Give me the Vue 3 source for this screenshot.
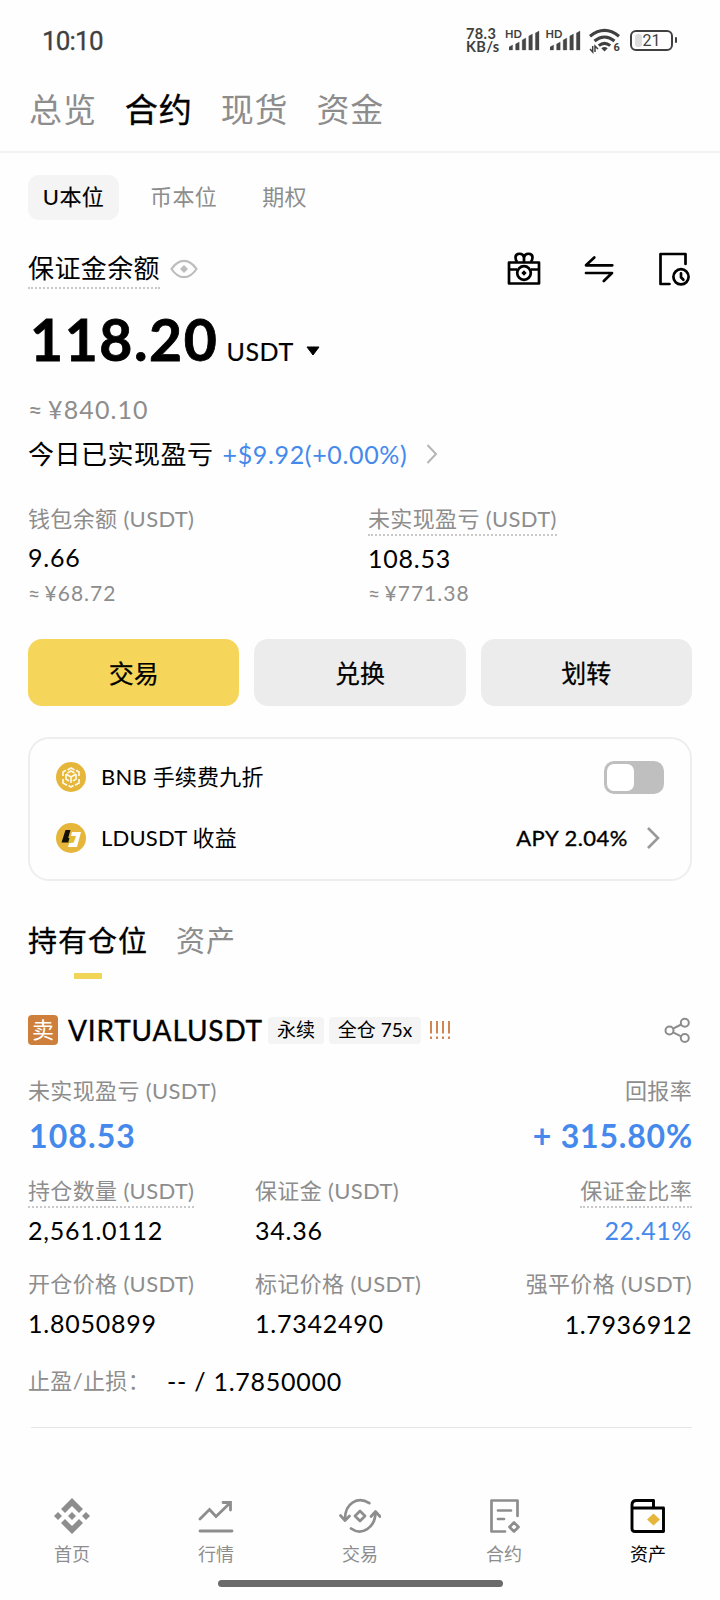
<script setup>
const mainTabs = ['总览', '合约', '现货', '资金']
const bars = [5, 8, 12, 16, 19]
const nav = ['首页', '行情', '交易', '合约', '资产']
</script>

<template>
  <div class="screen">
    <header class="status">
      <span class="clock">10:10</span>
      <div class="speed"><span>78.3</span><span>KB/s</span></div>
      <div v-for="n in 2" :key="n" class="signal">
        <span class="hd">HD</span>
        <svg width="31" height="21" viewBox="0 0 31 21">
          <path v-for="(h, i) in bars" :key="i" :d="`M${i * 6.6} 20V${22 - h}l3.6-2V20z`" fill="#454545" stroke="#454545" stroke-width=".3" stroke-linejoin="round" />
        </svg>
      </div>
      <svg class="wifi" width="32" height="27" viewBox="0 -1 32 27">
        <g fill="none" stroke="#404040" stroke-width="3.1">
          <path d="M1 8.2Q15.500 -3.500 30 8.200M5.500 13Q15.500 5 25.500 13M9.800 17.600Q15.500 13 21.200 17.600" />
        </g>
        <path d="M12.300 20.300q3.200-2.600 6.400 0L15.500 23.500z" fill="#404040" />
        <path d="M3.700 18v6L1 21M6 24v-6l3 3" fill="none" stroke="#404040" stroke-width="1.500" />
        <text x="24.500" y="23" font-family="Roboto, sans-serif" font-size="11" font-weight="700" fill="#404040">6</text>
      </svg>
      <div class="battery"><i></i><span>21</span></div>
      <b class="cap"></b>
    </header>

    <nav class="tabs">
      <span v-for="t in mainTabs" :key="t" :class="{ on: t === '合约' }">{{ t }}</span>
    </nav>

    <main>
      <div class="subtabs">
        <span class="pill">U本位</span><span class="coin">币本位</span><span>期权</span>
      </div>

      <div class="balance">
        <span class="title dotted">保证金余额</span>
        <svg class="eye" width="28" height="20" viewBox="0 0 28 20" fill="none" stroke="#bdbdbd" stroke-width="2.200">
          <path d="M1.500 10Q7 1.800 14 1.800T26.500 10Q21 18.200 14 18.200T1.500 10z" />
          <path d="M14 6l4 4-4 4-4-4z" fill="#bdbdbd" stroke="none" />
        </svg>
        <div class="tools">
          <svg width="34" height="34" viewBox="0 0 34 34" fill="none" stroke="#000" stroke-width="2.700" stroke-linejoin="round">
            <path d="M2 10.500h30v21H2zM2 17.500h8M24 17.500h8" />
            <circle cx="17" cy="21" r="6.800" />
            <path d="M17 10V5.500C16 0 8.500 1 8.500 5.500q0 3 2 4.500M17 5.500C18 0 25.500 1 25.500 5.500q0 3-2 4.500" />
            <path d="M17 18.300l2.700 2.700-2.700 2.700-2.700-2.700z" fill="#000" stroke="none" />
          </svg>
          <svg width="30" height="28" viewBox="0 0 30 28" fill="none" stroke="#000" stroke-width="2.700" stroke-linecap="round" stroke-linejoin="round">
            <path d="M28.300 10.300H2L10.300 2.500M2 18h26L19.800 26" />
          </svg>
          <svg width="34" height="34" viewBox="0 0 34 34" fill="none" stroke="#000" stroke-width="2.700" stroke-linecap="round" stroke-linejoin="round">
            <path d="M28.500 12V2H3.500v30h9" />
            <circle cx="24" cy="24.800" r="7.600" />
            <path d="M24 21.300v4l2.400 2.500" />
          </svg>
        </div>
      </div>

      <div class="amount">
        <b>118.20</b><span>USDT</span>
        <svg width="14" height="10" viewBox="0 0 14 10"><path d="M1 1h12L7 9z" stroke="#000" stroke-linejoin="round" /></svg>
      </div>
      <div class="fiat">≈ ¥840.10</div>
      <div class="today">
        <span>今日已实现盈亏</span><em>+$9.92(+0.00%)</em>
        <svg width="12" height="20" viewBox="0 0 12 20" fill="none" stroke="#b5b5b5" stroke-width="2"><path d="M1.500 1l8.500 9-8.500 9" /></svg>
      </div>

      <div class="stats">
        <div>
          <span class="label">钱包余额 (USDT)</span>
          <div class="num">9.66</div>
          <div class="approx">≈ ¥68.72</div>
        </div>
        <div>
          <span class="label dotted">未实现盈亏 (USDT)</span>
          <div class="num low">108.53</div>
          <div class="approx">≈ ¥771.38</div>
        </div>
      </div>

      <div class="buttons">
        <button class="primary">交易</button><button>兑换</button><button>划转</button>
      </div>

      <section class="card">
        <div class="item">
          <svg width="30" height="30" viewBox="0 0 30 30">
            <circle cx="15" cy="15" r="15" fill="#e5b63a" />
            <g fill="none" stroke="#fff8e4" stroke-width="1.700">
              <path d="M11.500 8L15 6l3.500 2M7 14v-4l3-1.700M20 8.300l3 1.700v4M7 17v4l4 2.300M23 17v4l-4 2.300M12.500 23.500L15 25l2.500-1.500" />
              <path d="M10 12l5 3 5-3M15 15v6M10 12v5l3 2M20 12v5l-3 2M11.500 11L15 9l3.500 2" />
            </g>
          </svg>
          <span>BNB 手续费九折</span>
          <i class="toggle"></i>
        </div>
        <div class="item">
          <svg width="30" height="30" viewBox="0 0 30 30">
            <circle cx="15" cy="15" r="15" fill="#e5b63a" />
            <path d="M9.500 7h5l-2.300 8h4.500l-1.500 4.500H5.500z" fill="#14110a" />
            <path d="M16 9h9l-4 15h-9l1.300-4.500h4.400L20 13h-5z" fill="#fff" />
            <path d="M13.500 15h4.500l-1.300 4.500h-4.500z" fill="#dcbf27" />
          </svg>
          <span>LDUSDT 收益</span>
          <strong>APY 2.04%</strong>
          <svg class="go" width="14" height="24" viewBox="0 0 14 24" fill="none" stroke="#999" stroke-width="2.600"><path d="M2 2l10 10L2 22" /></svg>
        </div>
      </section>

      <div class="holdtabs"><span class="on">持有仓位</span><span>资产</span></div>

      <div class="pair">
        <span class="side">卖</span><span class="symbol">VIRTUALUSDT</span>
        <span class="tag">永续</span><span class="tag wide">全仓 75x</span>
        <svg class="risk" width="22" height="20" viewBox="0 0 22 20" stroke="#cf8652" stroke-width="2">
          <path d="M2 1v12.500M8 1v12.500M14 1v12.500M20 1v12.500M2 16.500v2.500M8 16.500v2.500M14 16.500v2.500M20 16.500v2.500" />
        </svg>
        <svg class="share" width="27" height="27" viewBox="0 0 27 27" fill="none" stroke="#8c8c8c" stroke-width="2">
          <circle cx="5.500" cy="13.500" r="4" /><circle cx="20.800" cy="5.800" r="4" /><circle cx="20.800" cy="21" r="4" />
          <path d="M9 11.700l8.200-4.200M9 15.300l8.200 4" />
        </svg>
      </div>

      <div class="row pnl"><span class="label">未实现盈亏 (USDT)</span><span class="label">回报率</span></div>
      <div class="row big"><b>108.53</b><b>+ 315.80%</b></div>

      <div class="grid first">
        <div><span class="label dotted">持仓数量 (USDT)</span><div class="num">2,561.0112</div></div>
        <div><span class="label">保证金 (USDT)</span><div class="num">34.36</div></div>
        <div class="end"><span class="label dotted">保证金比率</span><div class="num blue">22.41%</div></div>
      </div>
      <div class="grid">
        <div><span class="label">开仓价格 (USDT)</span><div class="num">1.8050899</div></div>
        <div><span class="label">标记价格 (USDT)</span><div class="num">1.7342490</div></div>
        <div class="end"><span class="label">强平价格 (USDT)</span><div class="num low">1.7936912</div></div>
      </div>
      <div class="stop"><span class="label">止盈/止损：</span><span class="num">-- / 1.7850000</span></div>
      <hr>
    </main>

    <footer class="nav">
      <div v-for="(name, i) in nav" :key="name" :class="{ active: i === 4 }">
        <svg v-if="i === 0" width="42" height="36" viewBox="0 0 42 36" fill="#8d8d8d">
          <path d="M21 0l11 11-4 4-7-7-7 7-4-4zM21 36l11-11-4-4-7 7-7-7-4 4zM7 14l4 4-4 4-4-4zM35 14l4 4-4 4-4-4zM21 14l4 4-4 4-4-4z" />
        </svg>
        <svg v-else-if="i === 1" width="42" height="36" viewBox="0 0 42 36" fill="none" stroke="#8d8d8d" stroke-width="2.800" stroke-linecap="round">
          <path d="M5 21l9.500-9.500 6.500 7L35 5M28 4.500h7.500V12M5 33h32" />
        </svg>
        <svg v-else-if="i === 2" width="42" height="36" viewBox="0 0 42 36" fill="none" stroke="#8d8d8d" stroke-width="2.700" stroke-linecap="round" stroke-linejoin="round">
          <path d="M30.300 5.200C19-2 6 5 6 21M1.500 17.500L6 22.500l4.500-4.500M12 30.500C22.500 38 36.500 30 36.500 14M32 18.500l4.500-5 4.500 5M21 13l5 5-5 5-5-5z" />
        </svg>
        <svg v-else-if="i === 3" width="42" height="36" viewBox="0 0 42 36" fill="none" stroke="#8d8d8d" stroke-width="2.700" stroke-linecap="round" stroke-linejoin="round">
          <path d="M34.500 18V2.500h-26v31H22M15 12.500h13M15 21h6M31 24.500l4.500 4.500-4.500 4.500-4.500-4.500z" />
        </svg>
        <svg v-else width="42" height="36" viewBox="0 0 42 36" fill="none" stroke="#000" stroke-width="2.900" stroke-linejoin="round">
          <path d="M5 10v20.500q0 3 3 3h28.500V10zM5 10V7q0-4.500 4.500-4.500h17V10" />
          <path d="M26.500 15.500l6.500 6-6.500 6-6.500-6z" fill="#e5b63a" stroke="none" />
        </svg>
        <span>{{ name }}</span>
      </div>
    </footer>
    <div class="homebar"></div>
  </div>
</template>

<style>
body { background: #fff; }
</style>

<style scoped>
.screen {
  width: 720px;
  height: 1600px;
  overflow: hidden;
  background: #fefefe;
  color: #000;
  font-family: Lato, "Noto Sans CJK SC", sans-serif;
  font-size: 22px;
  box-sizing: border-box;
}
.screen * { box-sizing: border-box; }
svg { display: block; flex: none; }
span { white-space: nowrap; }
main { padding: 0 28px; }

.status { height: 80px; display: flex; align-items: center; padding-left: 42px; color: #404040; }
.clock { font: 400 26px/30px Roboto, sans-serif; letter-spacing: -.8px; width: 424px; padding-top: 1px; -webkit-text-stroke: .3px #404040; }
.speed { width: 39px; display: flex; flex-direction: column; font: 700 14.500px/13px Lato, sans-serif; letter-spacing: .4px; }
.signal { display: flex; width: 40.500px; position: relative; padding-left: 4px; }
.hd { position: absolute; left: 0; top: -2px; font: 700 11px/12px Lato, sans-serif; }
.wifi { margin-left: 3px; }
.battery { position: relative; width: 43px; height: 21px; margin-left: 9px; border: 2px solid #404040; border-radius: 6px; display: flex; align-items: center; justify-content: center; font: 400 16px/18px Roboto, sans-serif; }
.battery i { position: absolute; left: 3px; top: 2px; width: 7px; height: 13px; border-radius: 3px; background: #ddd; }
.battery span { position: relative; top: 1px; }
.cap { width: 2px; height: 6px; margin-left: 2px; background: #404040; border-radius: 1px; }

.tabs { height: 73px; border-bottom: 2px solid #f3f3f3; padding: 0 29px; display: flex; gap: 28px; font-size: 33px; line-height: 58px; letter-spacing: .9px; color: #8d8d8d; }
.tabs .on { color: #000; -webkit-text-stroke: .4px #000; }

.subtabs { margin-top: 22px; height: 45px; display: flex; line-height: 44px; color: #8d8d8d; letter-spacing: .4px; }
.pill { width: 91px; border-radius: 11px; background: #f4f4f4; color: #000; text-align: center; -webkit-text-stroke: .15px #000; }
.coin { margin: 0 45px 0 31px; }

.balance { margin-top: 29px; height: 40px; display: flex; align-items: center; }
.title { font-size: 26px; line-height: 38px; letter-spacing: .4px; }
.dotted { border-bottom: 2px dotted #c9c9c9; }
.eye { margin-left: 10px; }
.tools { margin: 0 1px 0 auto; display: flex; align-items: center; gap: 43px; }

.amount { margin-top: 14px; height: 72px; display: flex; align-items: baseline; line-height: 72px; }
.amount b { font-size: 57px; letter-spacing: 1.600px; margin-left: 2px; -webkit-text-stroke: .8px #000; }
.amount span { font-size: 25px; letter-spacing: .6px; margin-left: 8px; -webkit-text-stroke: .2px #000; }
.amount svg { margin-left: 12px; position: relative; top: -5px; }
.fiat { margin-top: 18px; height: 32px; line-height: 32px; font-size: 25px; letter-spacing: 1.100px; word-spacing: -3px; color: #8d8d8d; }
.today { margin-top: 13px; height: 32px; display: flex; align-items: center; font-size: 26px; line-height: 32px; letter-spacing: .5px; }
.today em { font-style: normal; font-size: 25px; color: #4489eb; margin: 0 19px 0 9px; letter-spacing: .65px; }

.label { display: inline-block; height: 33px; line-height: 32px; font-size: 22px; letter-spacing: .35px; color: #8d8d8d; }
.num { height: 30px; line-height: 30px; font-size: 25px; letter-spacing: .75px; }
.num.low { position: relative; top: 1px; }
.stats { margin-top: 33px; height: 105px; display: grid; grid-template-columns: 340px 1fr; }
.stats .num { margin-top: 6px; }
.approx { margin-top: 6px; line-height: 30px; font-size: 21px; letter-spacing: 1px; word-spacing: -3px; color: #8d8d8d; }

.buttons { margin-top: 31px; display: grid; grid-template-columns: repeat(3, 1fr); gap: 15px; }
.buttons button { height: 67px; padding: 0; border: 0; border-radius: 14px; background: #ececec; color: #000; font: 25px/66px Lato, "Noto Sans CJK SC", sans-serif; -webkit-text-stroke: .25px #000; }
.buttons .primary { background: #f5d65b; }

.card { margin-top: 31px; height: 144px; padding: 7px 26px 0; border: 2px solid #eee; border-radius: 21px; }
.item { height: 61px; display: flex; align-items: center; gap: 15px; letter-spacing: .2px; }
.item span { padding-bottom: 4px; }
.item strong { margin-left: auto; font-weight: 400; letter-spacing: .5px; -webkit-text-stroke: .35px #000; }
.item .go { margin: 0 4px 0 3px; }
.toggle { width: 60px; height: 33px; margin: 1px 0 0 auto; padding: 3px; border-radius: 10px; background: #bfbfbf; }
.toggle::before { content: ""; display: block; width: 27px; height: 27px; border-radius: 7px; background: #fff; }

.holdtabs { margin-top: 40px; height: 58px; display: flex; gap: 28px; font-size: 29px; line-height: 40px; letter-spacing: 1px; color: #8d8d8d; }
.holdtabs .on { color: #000; -webkit-text-stroke: .3px #000; }
.holdtabs .on::after { content: ""; display: block; width: 28px; height: 6px; margin: 12px auto 0; border-radius: 1px; background: #f0d558; }

.pair { margin-top: 36px; height: 30px; display: flex; align-items: center; }
.side { width: 30px; height: 30px; border-radius: 4px; background: #cd7f3b; color: #fff; font-size: 22px; line-height: 29px; text-align: center; }
.symbol { margin-left: 10px; width: 195px; font-size: 28px; line-height: 32px; letter-spacing: .85px; -webkit-text-stroke: .35px #000; }
.tag { width: 56px; height: 27px; margin-left: 5px; border-radius: 4px; background: #f4f4f4; font-size: 19px; line-height: 26px; text-align: center; }
.tag.wide { width: 92px; }
.risk { margin-left: 8px; }
.share { margin: 0 1px 0 auto; }

.row { display: flex; justify-content: space-between; }
.pnl { margin-top: 30px; }
.big { margin-top: 12px; height: 32px; line-height: 32px; padding-left: 1px; font-size: 32px; letter-spacing: 1.100px; color: #4489eb; }
.big b:last-child { letter-spacing: .8px; margin-right: -1px; }
.grid { margin-top: 22px; height: 71px; display: grid; grid-template-columns: 227px 1fr auto; }
.grid.first { margin-top: 23px; }
.grid .num { margin-top: 7px; }
.end { text-align: right; }
.end .num { letter-spacing: .6px; }
.num.blue { color: #4489eb; }
.stop { margin-top: 27px; height: 30px; display: flex; align-items: center; }
.stop .num { margin-left: 17px; }
hr { margin: 31px 0 0 3px; border: 0; height: 1px; background: #e6e6e6; }

.nav { margin-top: 70px; height: 68px; display: grid; grid-template-columns: repeat(5, 1fr); color: #8d8d8d; }
.nav div { display: flex; flex-direction: column; align-items: center; gap: 9px; font-size: 18px; line-height: 22px; }
.nav .active { color: #000; }
.homebar { width: 285px; height: 7px; margin: 14px auto 0; border-radius: 4px; background: #6b6b6b; }
</style>
